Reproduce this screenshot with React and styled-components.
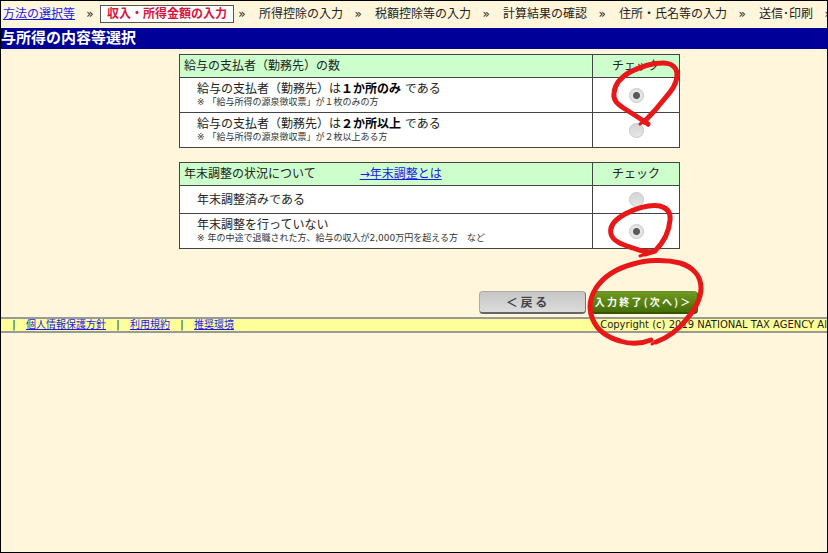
import { Fragment } from "react";
import styled, { createGlobalStyle } from "styled-components";

const GlobalStyle = createGlobalStyle`
	* {
		box-sizing: border-box;
	}

	body {
		margin: 0;
		background: #fff6dc;
		color: #222;
		font-family: "DejaVu Sans", "Noto Sans CJK JP", sans-serif;
		font-size: 12px;
		line-height: 16px;
	}
`;

const Page = styled.div`
	min-height: 100vh;
	border: 1px solid #000;
	overflow: hidden;
`;

const Link = styled.a`
	color: #1a1aee;
	text-decoration: underline;
`;

const Steps = styled.nav`
	display: flex;
	align-items: center;
	height: 27px;
	padding: 0 0 2px 2px;
	overflow: hidden;
	white-space: nowrap;
`;

const Step = styled.span`
	flex: none;
`;

const CurrentStep = styled(Step)`
	margin: 0 -7px;
	padding: 0 6px;
	border: 1px solid #555;
	background: #fff;
	color: #dc143c;
	font-weight: bold;
`;

const Separator = styled.span`
	flex: none;
	width: 32px;
	padding-right: 2px;
	text-align: center;
`;

const Title = styled.h1`
	margin: 0;
	height: 21px;
	background: #000099;
	color: #fff;
	font-size: 15px;
	line-height: 20px;
	white-space: nowrap;
`;

const Main = styled.main`
	display: flex;
	justify-content: center;
	padding: 5px 0 3px 31px;
`;

const Content = styled.div`
	position: relative;
	width: 100%;
	max-width: 501px;
	display: flex;
	flex-direction: column;
	gap: 14px;
`;

const Table = styled.table`
	width: 100%;
	border-collapse: collapse;
	table-layout: fixed;
	background: #fff;

	th,
	td {
		border: 1px solid #444;
	}
`;

const HeadCell = styled.th`
	width: ${({ $narrow }) => ($narrow ? "87px" : "auto")};
	height: 23px;
	padding: 0 4px;
	background: #ccffcc;
	font-weight: normal;
	text-align: ${({ $narrow }) => ($narrow ? "center" : "left")};
`;

const HelpLink = styled(Link)`
	margin-left: 44px;
`;

const LabelCell = styled.td`
	height: ${({ $tall }) => ($tall ? "35px" : "28px")};
	padding: 0 17px;
`;

const ChoiceLabel = styled.label`
	display: block;
	line-height: 14px;

	strong {
		color: #000;
	}
`;

const Note = styled.small`
	display: block;
	color: #333;
	font-size: 9px;
	line-height: 12px;
`;

const RadioCell = styled.td`
	padding: 0;
	text-align: center;
`;

const Radio = styled.input`
	appearance: none;
	display: block;
	width: 15px;
	height: 15px;
	margin: 0 auto;
	border: 1px solid #c8c8c8;
	border-radius: 50%;
	background: linear-gradient(#d4d4d4, #e6e6e6);

	&:checked {
		background: radial-gradient(circle, #5a5a5a 0 3px, #e4e4e4 4px);
	}
`;

const Actions = styled.div`
	display: grid;
	grid-template-columns: 1fr 1fr;
	gap: 5px;
	margin: 28px -18px 0 300px;
`;

const Button = styled.button`
	height: 23px;
	padding: 0;
	border: 1px solid;
	border-width: 1px 1px 2px;
	border-radius: 4px;
	font-family: "Noto Sans CJK JP", sans-serif;
	font-weight: bold;
	line-height: 16px;
	white-space: nowrap;
`;

const BackButton = styled(Button)`
	padding-right: 12px;
	border-color: #aaa #777 #666 #aaa;
	background: linear-gradient(#c6c6c6, #dcdcdc);
	color: #444;
	font-size: 12px;
`;

const NextButton = styled(Button)`
	padding-right: 4px;
	border-color: #6d8f2c #3f6208 #355504 #6d8f2c;
	background: linear-gradient(#6f9a22, #456d05);
	color: #fff;
	font-size: 10px;
`;

const Marks = styled.svg`
	position: absolute;
	top: -6px;
	right: -30px;
	z-index: 1;
	pointer-events: none;
`;

const Footer = styled.footer`
	display: grid;
	grid-template-columns: 1fr auto;
	border: solid #999;
	border-width: 2px 0;
	background: #ffff99;
	font-size: 10px;
	line-height: 12px;
	white-space: nowrap;
	overflow: hidden;
`;

const FooterLinks = styled.nav`
	display: flex;
	padding-left: 1px;
`;

const Bar = styled.span`
	width: 24px;
	text-align: center;
`;

const steps = [
	"所得控除の入力",
	"税額控除等の入力",
	"計算結果の確認",
	"住所・氏名等の入力",
	"送信･印刷",
];

const footerLinks = ["個人情報保護方針", "利用規約", "推奨環境"];

const questions = [
	{
		name: "payers",
		title: "給与の支払者（勤務先）の数",
		choices: [
			{
				text: (
					<>
						給与の支払者（勤務先）は<strong>１か所のみ</strong> である
					</>
				),
				note: "※ 「給与所得の源泉徴収票」が１枚のみの方",
				checked: true,
			},
			{
				text: (
					<>
						給与の支払者（勤務先）は<strong>２か所以上</strong> である
					</>
				),
				note: "※ 「給与所得の源泉徴収票」が２枚以上ある方",
			},
		],
	},
	{
		name: "adjustment",
		title: "年末調整の状況について",
		help: "→年末調整とは",
		choices: [
			{ text: "年末調整済みである" },
			{
				text: "年末調整を行っていない",
				note: "※ 年の中途で退職された方、給与の収入が2,000万円を超える方　など",
				checked: true,
			},
		],
	},
];

const Question = ({ name, title, help, choices }) => (
	<Table>
		<thead>
			<tr>
				<HeadCell scope="col">
					{title}
					{help && <HelpLink href="#help">{help}</HelpLink>}
				</HeadCell>
				<HeadCell scope="col" $narrow>
					チェック
				</HeadCell>
			</tr>
		</thead>
		<tbody>
			{choices.map(({ text, note, checked }, i) => (
				<tr key={i}>
					<LabelCell $tall={Boolean(note)}>
						<ChoiceLabel htmlFor={`${name}-${i}`}>
							{text}
							{note && <Note>{note}</Note>}
						</ChoiceLabel>
					</LabelCell>
					<RadioCell>
						<Radio
							type="radio"
							id={`${name}-${i}`}
							name={name}
							defaultChecked={checked}
						/>
					</RadioCell>
				</tr>
			))}
		</tbody>
	</Table>
);

// Hand-drawn red circles around the answers and the next button
const PenMarks = () => (
	<Marks
		width="125"
		height="302"
		viewBox="585 48 125 302"
		fill="none"
		stroke="#e81818"
		strokeWidth="5"
		strokeLinecap="round"
		strokeLinejoin="round"
		aria-hidden="true"
	>
		<path d="M648 124C641 119 633 114 625 109C617 104 613 100 614 93C615 83 621 77 630 72C640 67 652 63 663 63C671 63 677 67 677 75C677 84 671 91 666 97C659 106 652 114 644 122" />
		<path strokeWidth="3" d="M640 124L644 121L648 125" />
		<path d="M645 254L655 251C662 244 669 233 670 220C671 212 667 208 660 206C649 204 634 209 625 214C616 219 609 226 611 234C613 242 624 245 633 248C641 251 648 253 655 251" />
		<path strokeWidth="3" d="M640 256L648 253" />
		<path d="M651 340C641 344 629 344 620 341C606 337 597 329 593 320C587 307 591 296 596 288C604 276 618 268 633 264C646 260 665 259 680 263C693 267 701 276 701 288C701 301 692 313 686 320C678 330 667 338 656 342" />
		<path strokeWidth="3" d="M652 344L658 341" />
	</Marks>
);

const App = () => {
	return (
		<>
			<GlobalStyle />
			<Page>
				<Steps>
					<Step as={Link} href="#method">
						方法の選択等
					</Step>
					<Separator>»</Separator>
					<CurrentStep aria-current="step">収入・所得金額の入力</CurrentStep>
					{steps.map((step) => (
						<Fragment key={step}>
							<Separator>»</Separator>
							<Step>{step}</Step>
						</Fragment>
					))}
					<Separator>»</Separator>
				</Steps>
				<Title>与所得の内容等選択</Title>
				<Main>
					<Content>
						{questions.map((question) => (
							<Question key={question.name} {...question} />
						))}
						<Actions>
							<BackButton type="button">＜ 戻 る</BackButton>
							<NextButton type="button">入 力 終 了 ( 次 へ ) ＞</NextButton>
						</Actions>
						<PenMarks />
					</Content>
				</Main>
				<Footer>
					<FooterLinks>
						{footerLinks.map((link) => (
							<Fragment key={link}>
								<Bar>|</Bar>
								<Link href="#footer">{link}</Link>
							</Fragment>
						))}
					</FooterLinks>
					<span>Copyright (c) 2019 NATIONAL TAX AGENCY Al</span>
				</Footer>
			</Page>
		</>
	);
};

export default App;
